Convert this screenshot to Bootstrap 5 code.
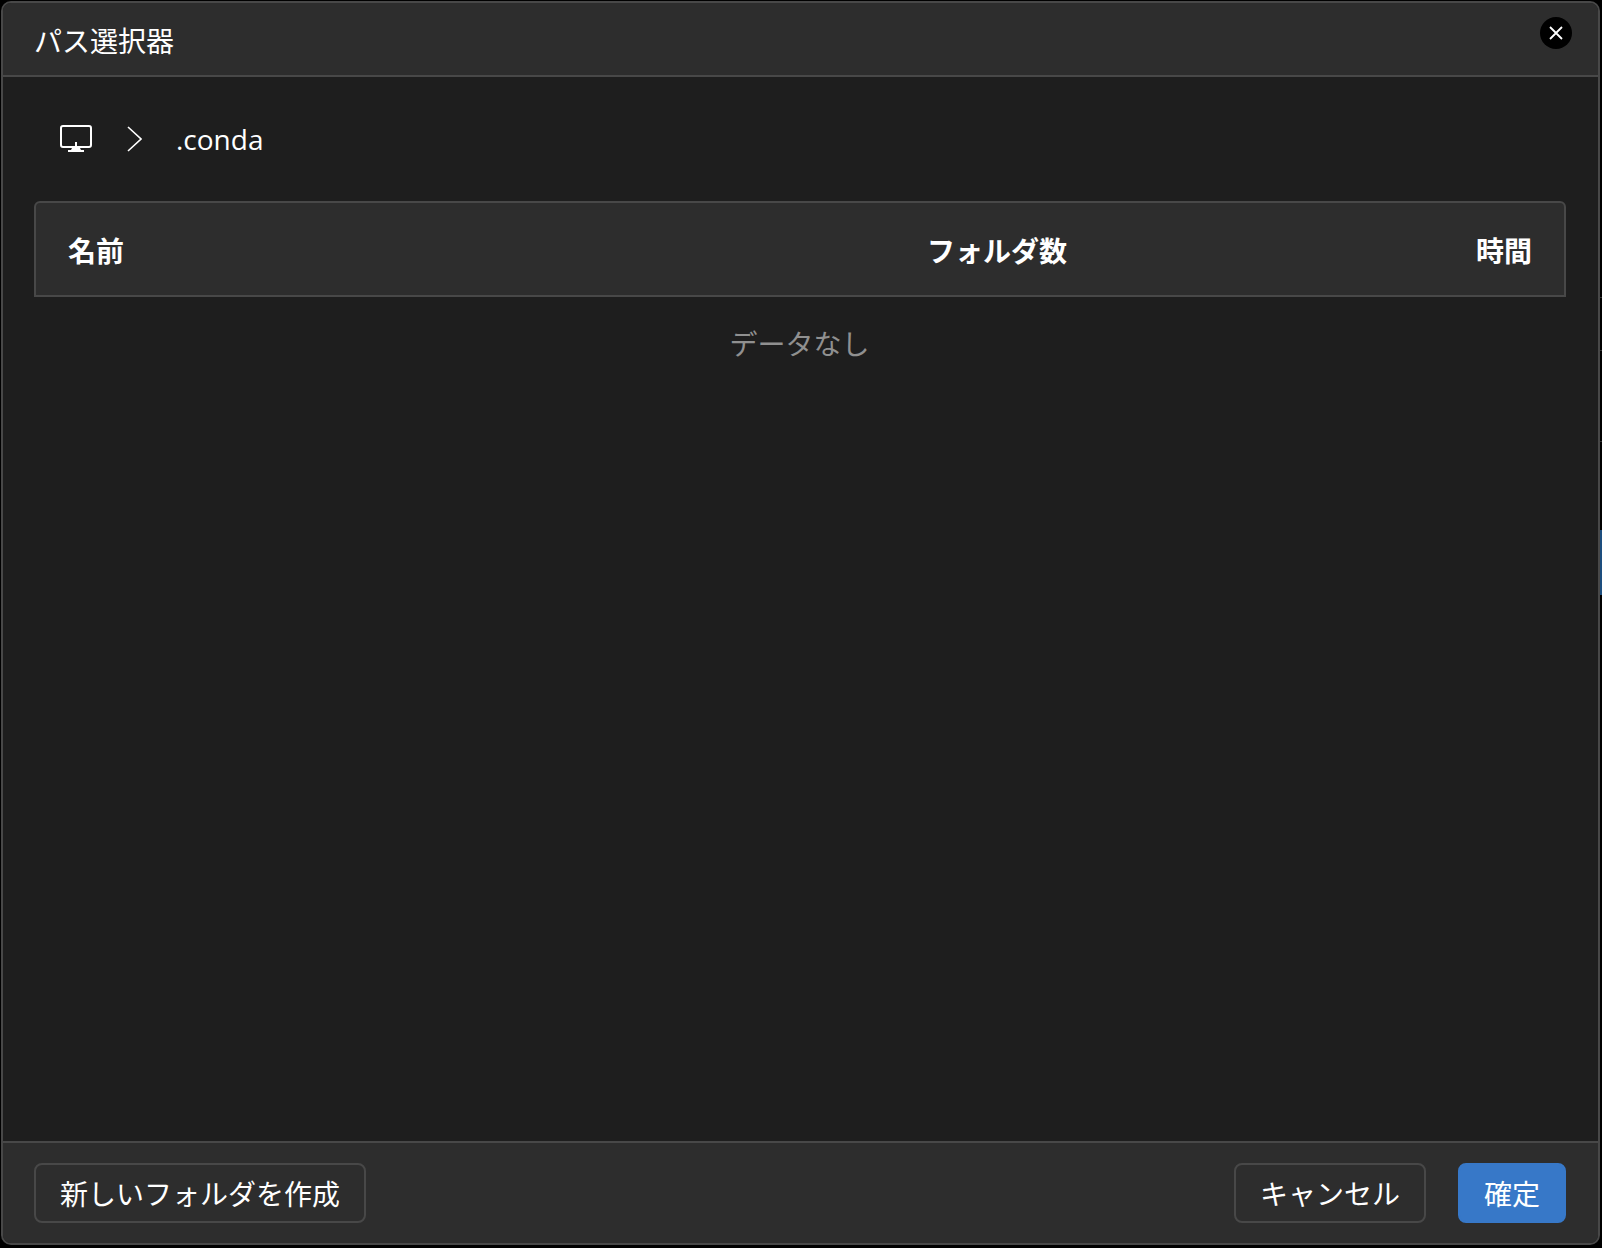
<!DOCTYPE html>
<html lang="ja">
<head>
    <meta charset="UTF-8">
    <title>パス選択器</title>
    <link href="https://cdn.jsdelivr.net/npm/bootstrap@5.3.0/dist/css/bootstrap.min.css" rel="stylesheet">
    <style>
        html, body {
            height: 100%;
            overflow: hidden;
        }
        body {
            background: #000;
            color: #fff;
            font-family: "Open Sans", "Noto Sans CJK JP", sans-serif;
            font-size: 28px;
            padding: 1px 2px 3px 1px;
        }
        .dlg {
            border: 2px solid #484848;
            border-radius: 10px;
            background: #1e1e1e;
            overflow: hidden;
        }
        .dlg-head, .dlg-foot {
            background: #2d2d2d;
        }
        .dlg-head {
            height: 74px;
            border-bottom: 2px solid #484848;
            padding: 0 32px 0 31px;
        }
        .dlg-title {
            font-size: 28px;
            line-height: 74px;
            margin: 1px 0 0;
            font-weight: 400;
        }
        .close-dot {
            width: 32px;
            height: 32px;
            padding: 0;
            border: 0;
            border-radius: 50%;
            background: #000;
            margin: 14px -6px 0 0;
        }
        .crumbs {
            height: 124px;
            padding: 0 0 0 57px;
        }
        .crumb-sep {
            margin: 0 34px 0 35px;
        }
        .file-head {
            height: 96px;
            margin: 0 32px 0 31px;
            padding: 3px 32px 0;
            background: #2d2d2d;
            border: 2px solid #484848;
            border-radius: 6px 6px 0 0;
            font-weight: 700;
        }
        .col-count {
            margin-left: 803px;
        }
        .no-data {
            color: #909090;
            line-height: 94px;
            padding-right: 2px;
        }
        .dlg-foot {
            height: 102px;
            border-top: 2px solid #484848;
            padding: 20px 32px 0 31px;
        }
        .act-btn {
            height: 60px;
            padding: 2px 24px 0;
            font-size: 28px;
            line-height: 1;
            color: #fff;
            background: transparent;
            border: 2px solid #484848;
            border-radius: 8px;
        }
        .act-btn.ok {
            background: #3778c8;
            border-color: #3778c8;
        }
        .cancel-gap {
            margin-right: 32px;
        }
        /* bits of the window behind the dialog, visible past its right edge */
        .behind {
            position: absolute;
            right: 0;
            width: 2px;
        }
        .behind-tab {
            top: 530px;
            height: 65px;
            background: #1d4e7e;
        }
        .behind-tick {
            height: 1px;
            background: #333;
        }
        .tick-a { top: 297px; }
        .tick-b { top: 350px; }
        .tick-c { top: 441px; }
    </style>
</head>
<body>

<div class="behind behind-tick tick-a"></div>
<div class="behind behind-tick tick-b"></div>
<div class="behind behind-tick tick-c"></div>
<div class="behind behind-tab"></div>

<div class="dlg d-flex flex-column h-100">
    <div class="dlg-head d-flex justify-content-between">
        <h1 class="dlg-title">パス選択器</h1>
        <button class="close-dot d-flex align-items-center justify-content-center" type="button" aria-label="閉じる">
            <svg width="14" height="14" viewBox="0 0 14 14"><path d="M1 1L13 13M13 1L1 13" stroke="#fff" stroke-width="1.8" fill="none"/></svg>
        </button>
    </div>

    <div class="flex-grow-1 d-flex flex-column">
        <div class="crumbs d-flex align-items-center">
            <svg width="32" height="28" viewBox="0 0 32 28" fill="none" stroke="#fff" stroke-width="2">
                <rect x="1" y="1" width="30" height="21" rx="2"/>
                <path d="M16 17v5" stroke-width="2"/>
                <path d="M12 23h8l1 2h3v2H8v-2h3z" fill="#fff" stroke="none"/>
            </svg>
            <svg class="crumb-sep" width="15" height="26" viewBox="0 0 15 26" fill="none" stroke="#fff" stroke-width="1.6"><path d="M1 1L14 13L1 25"/></svg>
            <span>.conda</span>
        </div>

        <div class="file-head d-flex align-items-center">
            <span>名前</span>
            <span class="col-count">フォルダ数</span>
            <span class="ms-auto">時間</span>
        </div>
        <div class="no-data text-center">データなし</div>
    </div>

    <div class="dlg-foot d-flex">
        <button class="btn act-btn" type="button">新しいフォルダを作成</button>
        <button class="btn act-btn ms-auto cancel-gap" type="button">キャンセル</button>
        <button class="btn act-btn ok" type="button">確定</button>
    </div>
</div>

<script src="https://cdn.jsdelivr.net/npm/bootstrap@5.3.0/dist/js/bootstrap.bundle.min.js"></script>
</body>
</html>
